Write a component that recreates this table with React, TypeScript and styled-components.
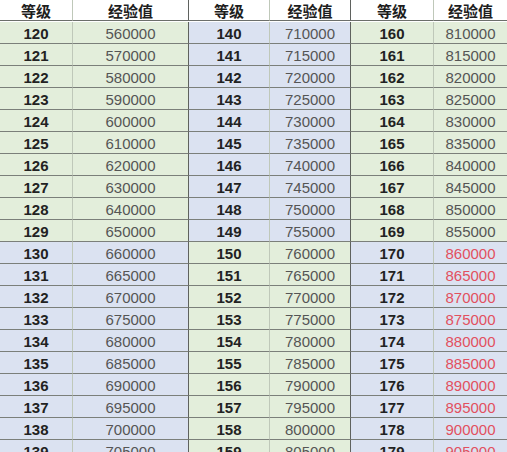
import React from 'react';
import styled, { createGlobalStyle } from 'styled-components';

type Tone = 'green' | 'blue' | 'white';

const GlobalStyle = createGlobalStyle`
  html, body {
    margin: 0;
    padding: 0;
    background: #ffffff;
  }
  body {
    font-family: 'Liberation Sans', Arial, 'Noto Sans CJK SC', sans-serif;
  }
`;

const tones: Record<Tone, string> = {
  green: '#e3eedb',
  blue: '#dbe2f1',
  white: '#ffffff',
};

const Sheet = styled.div`
  display: grid;
  grid-template-columns: 73px 116px 81px 81px 83px 73px;
  grid-auto-rows: 22px;
  width: 507px;
  overflow: hidden;
  height: 452px;
`;

const Cell = styled.div<{ $tone: Tone; $edge: 'light' | 'dark' | 'none' }>`
  box-sizing: border-box;
  display: flex;
  align-items: center;
  justify-content: center;
  background: ${(p) => tones[p.$tone]};
  border-bottom: 1px solid #7b7f7a;
  border-right: ${(p) =>
    p.$edge === 'dark' ? '1px solid #5f625e' : p.$edge === 'light' ? '1px solid #bfc8b9' : 'none'};
  font-size: 15px;
  line-height: 1;
  padding-top: 1px;
`;

const HeadCell = styled(Cell)`
  height: 21px;
  font-family: 'Noto Sans CJK SC', 'Liberation Sans', sans-serif;
  font-weight: 700;
  font-size: 15px;
  color: #1e1e1e;
  border-bottom-color: #6c6f6b;
  padding-top: 0;
`;

const LevelCell = styled(Cell)`
  font-weight: 700;
  color: #222222;
`;

const ExpCell = styled(Cell)<{ $red: boolean }>`
  color: ${(p) => (p.$red ? '#e2505f' : '#555555')};
`;

const expFor = (lvl: number) =>
  lvl <= 130 ? 560000 + (lvl - 120) * 10000 : 660000 + (lvl - 130) * 5000;

const toneFor = (group: number, row: number): Tone => {
  const top = row < 10;
  if (group === 1) return top ? 'blue' : 'green';
  return top ? 'green' : 'blue';
};

const App: React.FC = () => {
  const rows = Array.from({ length: 20 }, (_, r) => r);
  const groups = [0, 1, 2];

  return (
    <>
      <GlobalStyle />
      <Sheet>
        {groups.map((g) => (
          <React.Fragment key={`h${g}`}>
            <HeadCell $tone="white" $edge="light">等级</HeadCell>
            <HeadCell $tone="white" $edge={g < 2 ? 'dark' : 'none'}>
              经验值
            </HeadCell>
          </React.Fragment>
        ))}
        {rows.map((r) =>
          groups.map((g) => {
            const lvl = 120 + g * 20 + r;
            const tone = toneFor(g, r);
            return (
              <React.Fragment key={lvl}>
                <LevelCell $tone={tone} $edge="light">
                  {lvl}
                </LevelCell>
                <ExpCell $tone={tone} $edge={g < 2 ? 'dark' : 'none'} $red={lvl >= 170}>
                  {expFor(lvl)}
                </ExpCell>
              </React.Fragment>
            );
          })
        )}
      </Sheet>
    </>
  );
};

export default App;
